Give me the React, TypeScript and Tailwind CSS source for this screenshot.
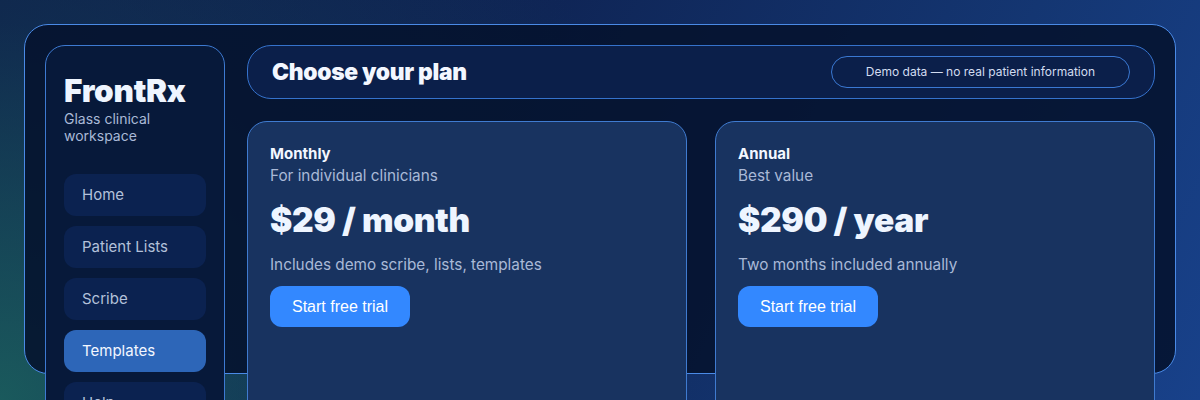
import React from "react";

const nav = ["Home", "Patient Lists", "Scribe", "Templates", "Help", "Settings"];

function PlanCard({
  name,
  sub,
  price,
  desc,
}: {
  name: string;
  sub: string;
  price: string;
  desc: string;
}) {
  return (
    <div className="flex h-[320px] flex-col items-start rounded-[20px] border border-[#3f7bd0] bg-[#183360] px-[22px] pt-[21px]">
      <div className="text-[15px] font-bold leading-[22px] text-[#f3f7ff]">{name}</div>
      <div className="text-[15.3px] leading-[22px] text-[#a9b9d7]">{sub}</div>
      <div className="mt-[14px] text-[33.5px] font-black leading-[39px] tracking-[-0.3px] text-[#eef5ff]">
        {price}
      </div>
      <div className="mt-[14px] text-[15.3px] leading-[22px] text-[#a9b9d7]">{desc}</div>
      <button className="mt-[10px] flex h-[41px] items-center rounded-[12px] bg-[#3388ff] px-[22px] text-[16px] text-white [font-family:'Liberation_Sans',Arial,sans-serif]">
        Start free trial
      </button>
    </div>
  );
}

export default function App() {
  return (
    <div className="h-screen w-full overflow-hidden bg-[radial-gradient(circle_at_0%_100%,rgba(28,100,95,0.85)_0%,rgba(20,70,90,0.35)_30%,transparent_55%),linear-gradient(115deg,#0e1b48_0%,#0f2556_40%,#143672_75%,#18418a_100%)] pt-6 [font-family:Inter,'Noto_Sans',sans-serif]">
      <div className="mx-6 h-[350px] rounded-[24px] border border-[#4a8ae6] bg-[rgba(5,18,46,0.88)] p-5">
        <div className="grid grid-cols-[180px_1fr] gap-[22px]">
          <aside className="h-[440px] rounded-[20px] border border-[#3d7ad2] bg-[#07193a] px-[18px] pt-[27px]">
            <div className="text-[31.5px] font-black leading-[36px] tracking-[-0.3px] text-[#eef5ff]">
              FrontRx
            </div>
            <div className="mt-[1px] text-[14px] leading-[17px] text-[#a9b9d7]">
              Glass clinical workspace
            </div>
            <nav className="mt-[30px] flex flex-col gap-[10px]">
              {nav.map((n) => (
                <div
                  key={n}
                  className={
                    n === "Templates"
                      ? "flex h-[42px] items-center rounded-[12px] bg-[#2d66b8] px-[18px] text-[15px] text-[#f3f7ff]"
                      : "flex h-[42px] items-center rounded-[12px] bg-[#0b2250] px-[18px] text-[15px] text-[#b3c1da]"
                  }
                >
                  {n}
                </div>
              ))}
            </nav>
          </aside>
          <main className="flex flex-col gap-[22px]">
            <header className="flex h-[54px] items-center justify-between rounded-[24px] border border-[#3572cc] bg-[#0b1f4a] pl-6 pr-6">
              <h1 className="text-[22.8px] font-black tracking-[-0.3px] text-[#f3f7ff]">
                Choose your plan
              </h1>
              <div className="flex h-[32px] items-center rounded-full border border-[#3a78d2] px-[34px] text-[12px] text-[#d2dcf0]">
                Demo data — no real patient information
              </div>
            </header>
            <div className="grid grid-cols-2 gap-[28px]">
              <PlanCard
                name="Monthly"
                sub="For individual clinicians"
                price="$29 / month"
                desc="Includes demo scribe, lists, templates"
              />
              <PlanCard
                name="Annual"
                sub="Best value"
                price="$290 / year"
                desc="Two months included annually"
              />
            </div>
          </main>
        </div>
      </div>
    </div>
  );
}
